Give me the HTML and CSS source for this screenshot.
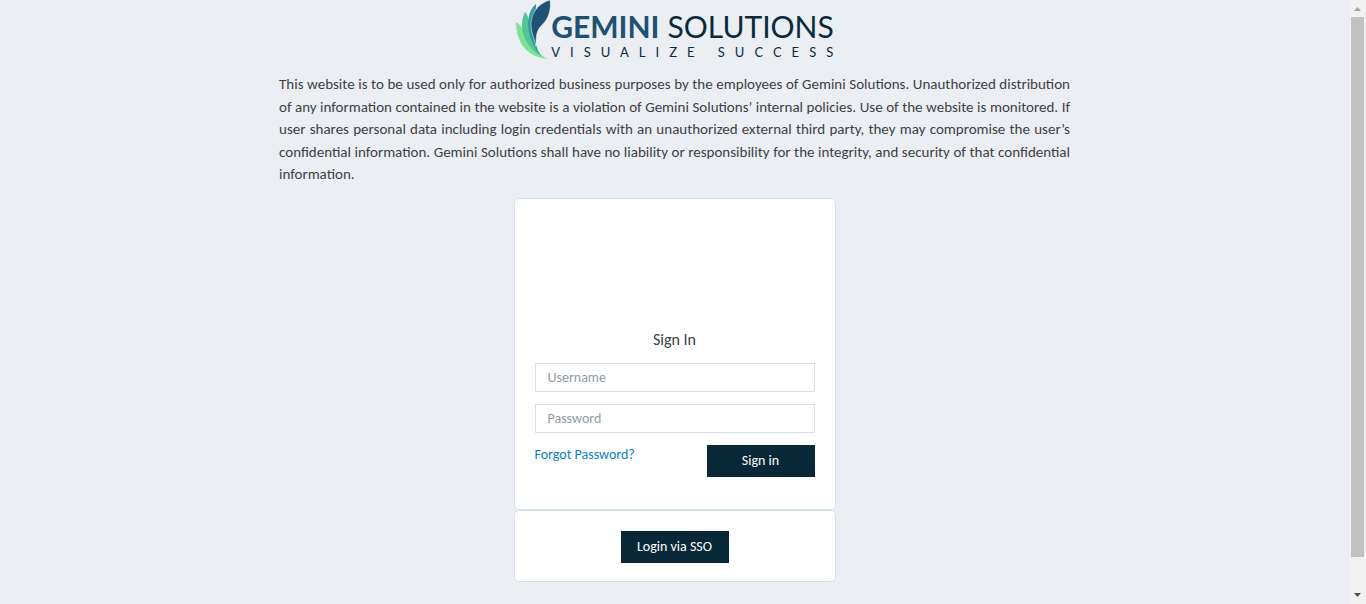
FILE: index.html
```html
<!DOCTYPE html>
<html lang="en">
<head>
<meta charset="utf-8">
<meta name="viewport" content="width=device-width, initial-scale=1">
<title>Gemini Solutions - Sign In</title>
<link rel="stylesheet" href="styles.css">
</head>
<body class="page">
<main class="content">
  <header class="logo">
    <svg class="logo-mark" viewBox="0 0 36 60" aria-hidden="true">
      <path fill="#7be495" d="M1 22C1 40 10 57 33 59C24 55 17 49 13 42C9 35 10 28 1 22Z"/>
      <path fill="#56c596" d="M10 12C3 25 8 47 28 57C21 50 18 41 15 34C12 26 16 18 10 12Z"/>
      <path fill="#329d9c" d="M21 4C9 14 11 38 25 55C21 47 20 39 17 32C14 23 22 14 21 4Z"/>
      <path fill="#205072" stroke="#ebeff4" stroke-width="0.500" d="M35 0C22 4 16 14 16 25C16 34 20 38 21 47C21 38 21 31 26 26C35 18 36 8 35 0Z"/>
    </svg>
    <div class="logo-text">
      <div class="logo-name"><strong class="logo-strong">GEMINI</strong><span>SOLUTIONS</span></div>
      <div class="logo-tagline">VISUALIZE SUCCESS</div>
    </div>
  </header>
  <p class="notice">This website is to be used only for authorized business purposes by the employees of Gemini Solutions. Unauthorized distribution of any information contained in the website is a violation of Gemini Solutions’ internal policies. Use of the website is monitored. If user shares personal data including login credentials with an unauthorized external third party, they may compromise the user’s confidential information. Gemini Solutions shall have no liability or responsibility for the integrity, and security of that confidential information.</p>
  <div class="panels">
    <form class="card card-signin">
      <h1 class="title">Sign In</h1>
      <input class="field" type="text" placeholder="Username" aria-label="Username">
      <input class="field" type="password" placeholder="Password" aria-label="Password">
      <div class="actions">
        <a class="forgot" href="#">Forgot Password?</a>
        <button class="button" type="button">Sign in</button>
      </div>
    </form>
    <section class="card card-sso">
      <button class="button" type="button">Login via SSO</button>
    </section>
  </div>
</main>
<div class="scrollbar" aria-hidden="true">
  <svg class="arrow" viewBox="0 0 17 17"><path fill="#a3a3a3" d="M5 11L8.500 7L12 11Z"/></svg>
  <div class="track"><div class="thumb"></div></div>
  <svg class="arrow" viewBox="0 0 17 17"><path fill="#505050" d="M5 6L8.500 10L12 6Z"/></svg>
</div>
</body>
</html>
```
FILE: styles.css
```css
* { box-sizing: border-box; }
.page {
  margin: 0;
  height: 100vh;
  display: flex;
  overflow: hidden;
  background: #ebeff4;
  color: #3b3f44;
  font: 14px/20px Carlito, Calibri, Lato, sans-serif;
}
.content {
  flex: 1;
  min-width: 0;
  display: flex;
  flex-direction: column;
  align-items: center;
  overflow: hidden;
}
.logo { display: flex; height: 60px; flex: none; }
.logo-mark { width: 36px; height: 60px; }
.logo-text { padding-top: 8px; color: #0a2a3b; }
.logo-name {
  display: flex;
  gap: 8px;
  font: 400 30px/36px Lato, sans-serif;
}
.logo-strong { font-weight: 700; color: #205072; }
.logo-tagline {
  margin-right: -10px;
  font: 400 13px/16px Lato, sans-serif;
  letter-spacing: 10px;
  white-space: nowrap;
}
.notice {
  width: 100%;
  max-width: 791px;
  margin: 13px 0 12px;
  font-size: 15px;
  line-height: 1.5;
  text-align: justify;
}
.panels { width: 322px; max-width: 100%; }
.card {
  background: #fff;
  border: 1px solid #d5e1e6;
  border-radius: 5px;
  padding: 20px;
}
.card-signin {
  display: flex;
  flex-direction: column;
  gap: 12px;
  padding: 131px 20px 32px;
}
.title {
  margin: 0 0 1px;
  font-size: 16px;
  line-height: 20px;
  font-weight: 400;
  text-align: center;
}
.field {
  height: 29px;
  padding: 0 12px;
  border: 1px solid #d5e1e6;
  background: #fff;
  font: inherit;
}
.field::placeholder { color: #8e9ea6; opacity: 1; }
.actions { display: flex; justify-content: space-between; align-items: flex-start; }
.forgot { color: #0c80c4; text-decoration: none; }
.button {
  min-width: 108px;
  height: 32px;
  padding: 0 16px;
  border: 0;
  background: #082737;
  color: #fff;
  font: inherit;
}
.card-sso { padding: 20px 20px 18px; text-align: center; line-height: 0; }
.scrollbar {
  width: 17px;
  display: flex;
  flex-direction: column;
  background: #f1f1f1;
}
.arrow { width: 17px; height: 17px; }
.track { flex: 1; padding: 0 2px; }
.thumb { height: 94.7%; background: #c1c1c1; }
```
